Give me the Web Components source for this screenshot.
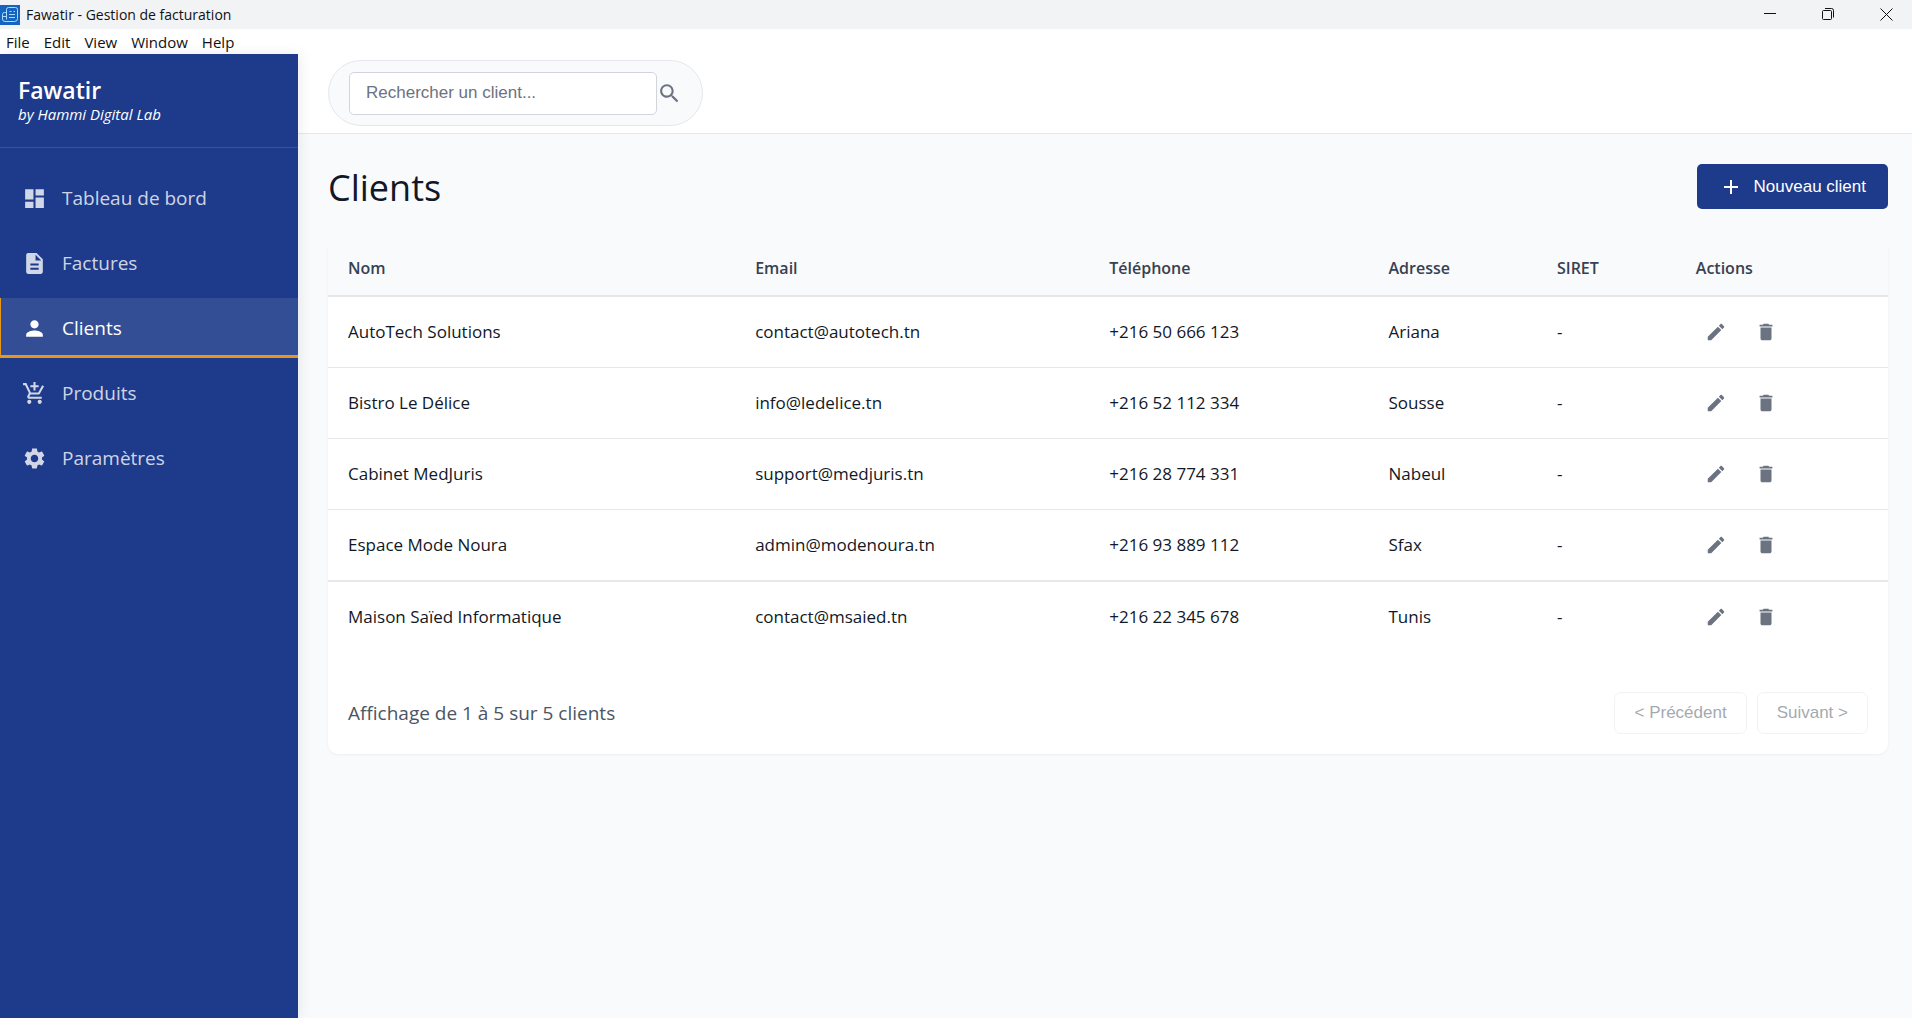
<!DOCTYPE html>
<html lang="fr">
<head>
<meta charset="utf-8">
<title>Fawatir - Gestion de facturation</title>
<style>
  html, body { height: 100%; }
  body {
    margin: 0;
    font-family: "Open Sans", "Noto Sans", sans-serif;
    color: #111827;
    background: #f9fafb;
    --primary: #1e3a8a;
    --accent: #e8971c;
    --line: #e5e7eb;
    --muted: #6b7280;
    --surface: #f9fafb;
    --control-font: "Liberation Sans", Arial, sans-serif;
  }
  fawatir-app { min-height: 100%; }
</style>
</head>
<body>
<fawatir-app></fawatir-app>

<script>
const define = (name, html, setup) => {
  const template = document.createElement('template');
  template.innerHTML = html;
  customElements.define(name, class extends HTMLElement {
    constructor() {
      super();
      this.attachShadow({ mode: 'open' }).append(template.content.cloneNode(true));
    }
    connectedCallback() {
      if (setup) setup(this, this.shadowRoot);
    }
  });
};

const ICONS = {
  dashboard: 'M3 13h8V3H3v10zm0 8h8v-6H3v6zm10 0h8V11h-8v10zm0-18v6h8V3h-8z',
  description: 'M14 2H6c-1.1 0-1.99.9-1.99 2L4 20c0 1.1.89 2 1.99 2H18c1.1 0 2-.9 2-2V8l-6-6zm2 16H8v-2h8v2zm0-4H8v-2h8v2zm-3-5V3.5L18.5 9H13z',
  person: 'M12 12c2.21 0 4-1.79 4-4s-1.79-4-4-4-4 1.79-4 4 1.79 4 4 4zm0 2c-2.67 0-8 1.34-8 4v2h16v-2c0-2.66-5.33-4-8-4z',
  cart: 'M11 9h2V6h3V4h-3V1h-2v3H8v2h3v3zm-4 9c-1.1 0-1.99.9-1.99 2S5.9 22 7 22s2-.9 2-2-.9-2-2-2zm10 0c-1.1 0-1.99.9-1.99 2s.89 2 1.99 2 2-.9 2-2-.9-2-2-2zm-9.83-3.25l.03-.12.9-1.63h7.45c.75 0 1.41-.41 1.75-1.03l3.86-7.01L19.42 4h-.01l-1.1 2-2.76 5H8.53l-.13-.27L6.16 6l-.95-2-.94-2H1v2h2l3.6 7.59-1.35 2.45c-.16.28-.25.61-.25.96 0 1.1.9 2 2 2h12v-2H7.42c-.13 0-.25-.11-.25-.25z',
  settings: 'M19.14 12.94c.04-.3.06-.61.06-.94 0-.32-.02-.64-.07-.94l2.03-1.58c.18-.14.23-.41.12-.61l-1.92-3.32c-.12-.22-.37-.29-.59-.22l-2.39.96c-.5-.38-1.03-.7-1.62-.94l-.36-2.54c-.04-.24-.24-.41-.48-.41h-3.84c-.24 0-.43.17-.47.41l-.36 2.54c-.59.24-1.13.57-1.62.94l-2.39-.96c-.22-.08-.47 0-.59.22L2.74 8.87c-.12.21-.08.47.12.61l2.03 1.58c-.05.3-.09.63-.09.94s.02.64.07.94l-2.03 1.58c-.18.14-.23.41-.12.61l1.92 3.32c.12.22.37.29.59.22l2.39-.96c.5.38 1.03.7 1.62.94l.36 2.54c.05.24.24.41.48.41h3.84c.24 0 .44-.17.47-.41l.36-2.54c.59-.24 1.13-.56 1.62-.94l2.39.96c.22.08.47 0 .59-.22l1.92-3.32c.12-.22.07-.47-.12-.61l-2.01-1.58zM12 15.6c-1.98 0-3.6-1.62-3.6-3.6s1.62-3.6 3.6-3.6 3.6 1.62 3.6 3.6-1.62 3.6-3.6 3.6z',
  search: 'M15.5 14h-.79l-.28-.27C15.41 12.59 16 11.11 16 9.5 16 5.91 13.09 3 9.5 3S3 5.91 3 9.5 5.91 16 9.5 16c1.61 0 3.09-.59 4.23-1.57l.27.28v.79l5 4.99L20.49 19l-4.99-5zm-6 0C7.01 14 5 11.99 5 9.5S7.01 5 9.5 5 14 7.01 14 9.5 11.99 14 9.5 14z',
  add: 'M19 13h-6v6h-2v-6H5v-2h6V5h2v6h6v2z',
  edit: 'M3 17.25V21h3.75L17.81 9.94l-3.75-3.75L3 17.25zM20.71 7.04c.39-.39.39-1.02 0-1.41l-2.34-2.34c-.39-.39-1.02-.39-1.41 0l-1.83 1.83 3.75 3.75 1.83-1.83z',
  delete: 'M6 19c0 1.1.9 2 2 2h8c1.1 0 2-.9 2-2V7H6v12zM19 4h-3.5l-1-1h-5l-1 1H5v2h14V4z'
};

define('md-icon', `
  <style>
    :host { display: block; flex: none; width: 24px; height: 24px; }
    svg { display: block; width: 100%; height: 100%; fill: currentColor; }
  </style>
  <svg viewBox="0 0 24 24" aria-hidden="true"><path/></svg>`,
  (host, root) => root.querySelector('path').setAttribute('d', ICONS[host.getAttribute('name')] || ''));

define('window-bar', `
  <style>
    :host { display: flex; align-items: center; height: 29px; background: #f2f3f5; color: #111; }
    .logo { width: 20px; height: 20px; margin-right: 6px; }
    .title { flex: 1; font-size: 14px; line-height: 20px; }
    .controls { display: flex; gap: 6px; }
    button { width: 52px; height: 29px; padding: 0; border: 0; background: none; color: #111;
      display: flex; align-items: center; justify-content: center; }
    button svg { width: 13px; height: 13px; fill: none; stroke: currentColor; }
  </style>
  <svg class="logo" viewBox="0 0 20 20" aria-hidden="true">
    <rect width="20" height="20" fill="#1565c0"/>
    <g fill="none" stroke="#a5dcff">
      <path d="M8.500 2.500H15.500Q17.500 2.500 17.500 4.500V13.500Q17.500 16.500 14.500 16.500H5Q2.500 16.500 2.500 14V9.500Q2.500 7.500 4.500 7.500H6.500"/>
      <path d="M6.500 14.500V4.500Q6.500 2.500 8.500 2.500M2.500 11.500H6.500M9.500 6.500h2M13.500 6.500h1.500M9 9.500h6M9 12.500h6"/>
    </g>
  </svg>
  <span class="title">Fawatir - Gestion de facturation</span>
  <div class="controls">
    <button type="button" aria-label="Réduire"><svg viewBox="0 0 13 13"><path d="M0 5.500H12"/></svg></button>
    <button type="button" aria-label="Restaurer"><svg viewBox="0 0 13 13"><rect x=".5" y="2.500" width="9" height="9" rx="1"/><path d="M3 .5H9.500Q11.500 .5 11.500 2.500V9.500"/></svg></button>
    <button type="button" aria-label="Fermer"><svg viewBox="0 0 13 13"><path d="M.5 .5 12.500 12.500M12.500 .5 .5 12.500"/></svg></button>
  </div>`);

define('menu-bar', `
  <style>
    :host { display: flex; height: 25px; background: #fff; }
    button { padding: 0 8px 0 6px; border: 0; background: none; font: inherit; font-size: 15px;
      line-height: 24px; color: #111; }
  </style>
  <button type="button">File</button><button type="button">Edit</button><button type="button">View</button><button type="button">Window</button><button type="button">Help</button>`);

define('nav-item', `
  <style>
    :host { display: block; }
    a { display: flex; align-items: center; gap: 15px; height: 60px; box-sizing: border-box;
      padding: 0 20px 0 21px; border-left: 1px solid transparent; color: rgba(255,255,255,.8);
      text-decoration: none; font-size: 19px; line-height: 24px; }
    md-icon { width: 25px; height: 25px; }
    :host([active]) a { color: #fff; background: rgba(255,255,255,.1); border-left-color: var(--accent);
      box-shadow: inset 0 -3px var(--accent); }
  </style>
  <a href="#"><md-icon></md-icon><span><slot></slot></span></a>`,
  (host, root) => {
    const icon = document.createElement('md-icon');
    icon.setAttribute('name', host.getAttribute('icon'));
    root.querySelector('md-icon').replaceWith(icon);
    if (host.hasAttribute('active')) root.querySelector('a').setAttribute('aria-current', 'page');
  });

define('side-bar', `
  <style>
    :host { display: flex; flex-direction: column; flex: none; width: 298px; background: var(--primary);
      color: #fff; box-shadow: 2px 0 12px rgba(0,0,0,.08); z-index: 1; }
    header { padding: 22px 18px; border-bottom: 1px solid rgba(255,255,255,.12); }
    h1 { margin: 0; font-size: 23px; line-height: 28px; font-weight: 600; }
    p { margin: 0; font-size: 15px; line-height: 21px; font-style: italic; }
    nav { display: flex; flex-direction: column; gap: 5px; padding-top: 20px; }
  </style>
  <header><h1>Fawatir</h1><p>by Hammi Digital Lab</p></header>
  <nav>
    <nav-item icon="dashboard">Tableau de bord</nav-item>
    <nav-item icon="description">Factures</nav-item>
    <nav-item icon="person" active>Clients</nav-item>
    <nav-item icon="cart">Produits</nav-item>
    <nav-item icon="settings">Paramètres</nav-item>
  </nav>`);

define('search-bar', `
  <style>
    :host { display: block; padding: 6px 30px 7px; background: #fff; border-bottom: 1px solid var(--line); }
    form { display: flex; align-items: center; box-sizing: border-box; width: 375px; height: 66px;
      padding: 0 20px; border: 1px solid var(--line); border-radius: 33px; background: var(--surface); }
    input { box-sizing: border-box; width: 308px; height: 43px; padding: 0 16px; border: 1px solid #d1d5db;
      border-radius: 5px; background: #fff; font-family: var(--control-font); font-size: 17px; color: #111827; }
    input::placeholder { color: var(--muted); opacity: 1; }
    button { padding: 0; border: 0; background: none; color: var(--muted); }
    md-icon { width: 25px; height: 25px; }
  </style>
  <form role="search">
    <input type="text" aria-label="Rechercher un client" placeholder="Rechercher un client...">
    <button type="button" aria-label="Rechercher"><md-icon name="search"></md-icon></button>
  </form>`);

define('page-heading', `
  <style>
    :host { display: flex; justify-content: space-between; align-items: flex-start; }
    h2 { margin: 0; font-size: 36px; line-height: 48px; font-weight: 500; }
    button { display: flex; align-items: center; gap: 11px; height: 45px; padding: 0 22px; border: 0;
      border-radius: 5px; background: var(--primary); color: #fff; font-family: var(--control-font);
      font-size: 17px; line-height: 20px; }
  </style>
  <h2>Clients</h2>
  <button type="button"><md-icon name="add"></md-icon><span>Nouveau client</span></button>`);

const CLIENTS = [
  ['AutoTech Solutions', 'contact@autotech.tn', '+216 50 666 123', 'Ariana', '-'],
  ['Bistro Le Délice', 'info@ledelice.tn', '+216 52 112 334', 'Sousse', '-'],
  ['Cabinet MedJuris', 'support@medjuris.tn', '+216 28 774 331', 'Nabeul', '-'],
  ['Espace Mode Noura', 'admin@modenoura.tn', '+216 93 889 112', 'Sfax', '-'],
  ['Maison Saïed Informatique', 'contact@msaied.tn', '+216 22 345 678', 'Tunis', '-']
];

define('client-table', `
  <style>
    :host { display: block; background: #fff; border-radius: 10px 10px 0 0; padding-bottom: 20px;
      box-shadow: 0 1px 3px rgba(0,0,0,.05); overflow: hidden; }
    table { width: 100%; table-layout: fixed; border-collapse: separate; border-spacing: 0; }
    th, td { box-sizing: border-box; padding: 0 20px; text-align: left; line-height: 24px; }
    th { height: 57px; background: var(--surface); border-bottom: 2px solid var(--line); color: #374151;
      font-size: 16px; font-weight: 600; }
    td { height: 71px; border-bottom: 1px solid var(--line); font-size: 17px; }
    tr:nth-last-child(2) td { height: 72px; border-bottom-width: 2px; }
    tr:last-child td { height: 70px; border-bottom: 0; }
    .actions { display: flex; gap: 10px; }
    button { display: flex; align-items: center; justify-content: center; width: 40px; height: 40px;
      padding: 0; border: 0; background: none; color: var(--muted); }
    md-icon { width: 22px; height: 22px; }
  </style>
  <table>
    <colgroup>
      <col style="width:26.1%"><col style="width:22.7%"><col style="width:17.9%">
      <col style="width:10.8%"><col style="width:8.9%"><col>
    </colgroup>
    <thead><tr><th>Nom</th><th>Email</th><th>Téléphone</th><th>Adresse</th><th>SIRET</th><th>Actions</th></tr></thead>
    <tbody></tbody>
  </table>`,
  (host, root) => {
    root.querySelector('tbody').innerHTML = CLIENTS.map(row => `
      <tr>${row.map(value => `<td>${value}</td>`).join('')}
        <td><div class="actions">
          <button type="button" aria-label="Modifier"><md-icon name="edit"></md-icon></button>
          <button type="button" aria-label="Supprimer"><md-icon name="delete"></md-icon></button>
        </div></td></tr>`).join('');
  });

define('table-pager', `
  <style>
    :host { display: flex; align-items: center; justify-content: space-between; height: 82px; padding: 0 20px;
      background: #fff; border-radius: 0 0 10px 10px; box-shadow: 0 1px 3px rgba(0,0,0,.05); }
    p { margin: 0; font-size: 19px; line-height: 28px; color: #4b5563; }
    .buttons { display: flex; gap: 10px; }
    button { height: 42px; padding: 0 19px; border: 1px solid var(--line); border-radius: 7px; background: #fff;
      color: #4b5563; font-family: var(--control-font); font-size: 17px; opacity: .5; }
  </style>
  <p>Affichage de 1 à 5 sur 5 clients</p>
  <div class="buttons">
    <button type="button" disabled>&lt; Précédent</button>
    <button type="button" disabled>Suivant &gt;</button>
  </div>`);

define('fawatir-app', `
  <style>
    :host { display: flex; flex-direction: column; height: 100%; }
    .body { display: flex; flex: 1; }
    .content { flex: 1; min-width: 0; display: flex; flex-direction: column; }
    main { padding: 30px 24px 30px 30px; }
    page-heading { margin-bottom: 28px; }
  </style>
  <window-bar></window-bar>
  <menu-bar></menu-bar>
  <div class="body">
    <side-bar></side-bar>
    <div class="content">
      <search-bar></search-bar>
      <main>
        <page-heading></page-heading>
        <client-table></client-table>
        <table-pager></table-pager>
      </main>
    </div>
  </div>`);
</script>
</body>
</html>
